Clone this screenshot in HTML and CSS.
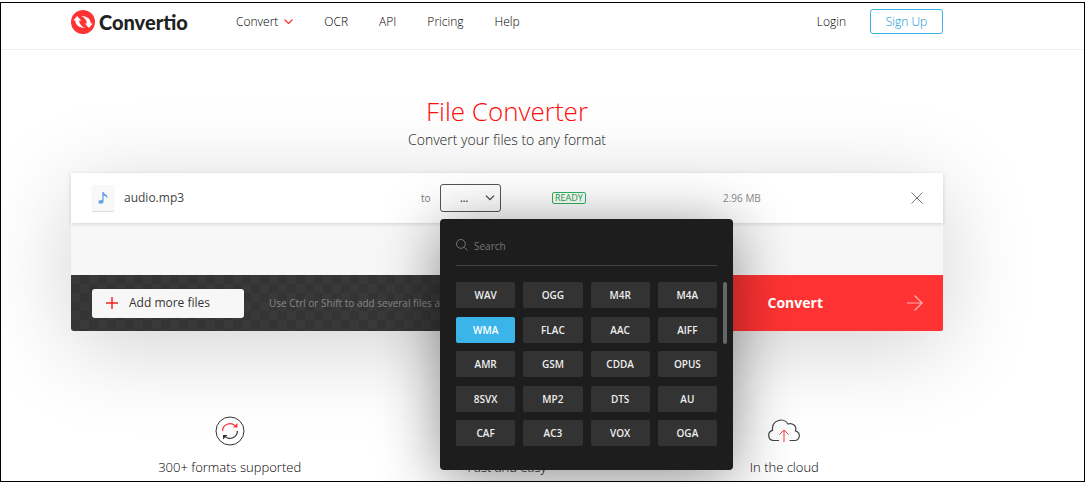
FILE: index.html
```html
<!DOCTYPE html>
<html lang="en">
<head>
<meta charset="utf-8">
<title>File Converter</title>
<link rel="stylesheet" href="styles.css">
</head>
<body>
<div class="page">
  <header class="header">
    <div class="container header-inner">
      <a class="logo" href="#">
        <svg class="logo-mark" viewBox="0 0 24 24" aria-hidden="true"><circle cx="12" cy="12" r="12" fill="#ff3333"/><path d="M2.3 10.6 6.1 6l4.1 4.6H8.100c.2 3.300 2.200 5.600 5.600 7.400-5.600-.1-9.300-2.900-9.500-7.400zM21.700 13.400 17.900 18l-4.100-4.600h2.100c-.2-3.300-2.200-5.600-5.600-7.400 5.600.1 9.300 2.900 9.500 7.400z" fill="#fff"/></svg>
        <span>Convertio</span>
      </a>
      <nav class="nav">
        <a href="#">Convert <svg class="nav-caret" viewBox="0 0 9 5" aria-hidden="true"><path d="M.5.5l4 4 4-4" fill="none" stroke="#ff3333" stroke-width="1.200"/></svg></a>
        <a href="#">OCR</a>
        <a href="#">API</a>
        <a href="#">Pricing</a>
        <a href="#">Help</a>
      </nav>
      <a class="login" href="#">Login</a>
      <button class="signup" type="button">Sign Up</button>
    </div>
  </header>

  <main class="container">
    <h1 class="title">File Converter</h1>
    <p class="subtitle">Convert your files to any format</p>

    <section class="panel">
      <div class="file-row">
        <div class="file">
          <span class="file-icon"><svg viewBox="0 0 10 12" aria-hidden="true"><path d="M4.300 0h1.300c.2 2 3.800 2.400 3.800 4.900 0 .7-.2 1.200-.6 1.700C8.900 4.700 7.300 4 5.600 3.700v5.800c0 1.300-1.200 2.300-2.700 2.300C1.400 11.800.4 11 .4 10c0-1.200 1.300-2.100 2.600-2.100.5 0 .9.1 1.300.3z" fill="#69a0e8"/></svg></span>
          <span class="file-name">audio.mp3</span>
        </div>
        <span class="to">to</span>
        <div class="format">
          <button class="format-toggle" type="button" aria-haspopup="true" aria-expanded="true" aria-label="Output format"><span>...</span><svg viewBox="0 0 10 6" aria-hidden="true"><path d="M1 .7l4 4 4-4" fill="none" stroke="#444" stroke-width="1.200"/></svg></button>
          <div class="menu">
            <label class="search">
              <svg viewBox="0 0 12 12" aria-hidden="true"><path d="M8.300 8.300l3.200 3.200M9.300 4.900a4.400 4.400 0 1 1-8.800 0 4.400 4.400 0 0 1 8.800 0z" fill="none" stroke="#777"/></svg>
              <input type="text" placeholder="Search" aria-label="Search">
            </label>
            <div class="options">
              <div class="option-grid">
                <button type="button">WAV</button><button type="button">OGG</button><button type="button">M4R</button><button type="button">M4A</button>
                <button type="button" class="active">WMA</button><button type="button">FLAC</button><button type="button">AAC</button><button type="button">AIFF</button>
                <button type="button">AMR</button><button type="button">GSM</button><button type="button">CDDA</button><button type="button">OPUS</button>
                <button type="button">8SVX</button><button type="button">MP2</button><button type="button">DTS</button><button type="button">AU</button>
                <button type="button">CAF</button><button type="button">AC3</button><button type="button">VOX</button><button type="button">OGA</button>
              </div>
              <div class="scroll-thumb"></div>
            </div>
          </div>
        </div>
        <div class="state"><span class="status">READY</span></div>
        <div class="file-end">
          <span class="size">2.96 MB</span>
          <button class="remove" type="button" aria-label="Remove file"><svg viewBox="0 0 12 12" aria-hidden="true"><path d="M.5.5l11 11M11.500.5l-11 11" fill="none" stroke="#777"/></svg></button>
        </div>
      </div>
      <div class="panel-space"></div>
      <div class="actions">
        <button class="add" type="button"><svg viewBox="0 0 12 12" aria-hidden="true"><path d="M6 0v12M0 6h12" stroke="#ff2222" stroke-width="1.500"/></svg>Add more files</button>
        <span class="hint">Use Ctrl or Shift to add several files at once</span>
        <button class="convert" type="button"><span>Convert</span><svg viewBox="0 0 16 16" aria-hidden="true"><path d="M0 8h15.200M7.500.5L15.200 8l-7.700 7.500" fill="none" stroke="#ffb3b3" stroke-width="1.200"/></svg></button>
      </div>
    </section>

    <section class="features">
      <div class="feature">
        <svg viewBox="0 0 34 30" aria-hidden="true"><circle cx="17" cy="15" r="14" fill="none" stroke="#333"/><path d="M9.600 15A7.400 7.400 0 0 1 22 9.600" fill="none" stroke="#ff3333" stroke-width="1.200"/><path d="M24.500 7v4.500H20z" fill="#ff3333"/><path d="M24.400 15A7.400 7.400 0 0 1 12 20.400" fill="none" stroke="#333" stroke-width="1.200"/><path d="M10 23.500v-4.500h4.500z" fill="#333"/></svg>
        <span>300+ formats supported</span>
      </div>
      <div class="feature">
        <svg viewBox="0 0 34 30" aria-hidden="true"><circle cx="17" cy="15" r="14" fill="none" stroke="#333"/><path d="M17 7v8l5 3" fill="none" stroke="#ff3333"/></svg>
        <span>Fast and easy</span>
      </div>
      <div class="feature">
        <svg viewBox="0 0 34 30" aria-hidden="true"><path d="M12 24.500H6.500A5.200 5.200 0 0 1 5.500 14.300C4.500 3.500 17 1 21 8c4.500-1.500 9 2 7.500 7 5.500 1.500 5 9.500-1 9.500h-5" fill="none" stroke="#444" stroke-width="1.200"/><path d="M17 26V14M12.500 18.500L17 14l4.500 4.500" fill="none" stroke="#ff3333"/></svg>
        <span>In the cloud</span>
      </div>
    </section>
  </main>
</div>
</body>
</html>
```
FILE: styles.css
```css
* { box-sizing: border-box; }
body {
  margin: 0;
  padding: 2px 1px 1px 0;
  background: #fff;
  color: #333;
  font: 12px/16px "Open Sans", "Noto Sans", sans-serif;
}
button, input { font: inherit; color: inherit; }
button { padding: 0; border: 0; cursor: pointer; }
a { color: inherit; text-decoration: none; }
svg { display: block; flex: none; }

.page {
  min-height: calc(100vh - 3px);
  border: 1px solid #000;
  overflow: hidden;
}
.container { max-width: 872px; margin-left: 70px; }

.header { padding: 6px 0 15px; border-bottom: 1px solid #eee; }
.header-inner { display: flex; align-items: center; }
.logo {
  display: flex;
  align-items: center;
  gap: 4px;
  width: 165px;
  color: #222;
  font: 900 20px/24px Lato, sans-serif;
}
.logo-mark { width: 24px; height: 24px; }
.nav { display: flex; flex: 1; gap: 31px; }
.nav, .login, .signup { font-weight: 300; }
.nav, .login { color: #000; }
.nav a { display: flex; align-items: center; gap: 6px; }
.nav-caret { width: 9px; height: 5px; }
.login { margin-right: 24px; }
.signup {
  width: 73px;
  height: 25px;
  border: 1px solid #3bb4ea;
  border-radius: 3px;
  background: #fff;
  color: #0a94d4;
}

.title {
  margin: 44px 0 0;
  color: #ff0c0c;
  font-size: 26px;
  font-weight: 300;
  line-height: 34px;
  text-align: center;
}
.subtitle {
  margin: 0 0 21px;
  color: #222;
  font-size: 14px;
  font-weight: 300;
  line-height: 24px;
  text-align: center;
}

.panel {
  border-radius: 3px;
  background: #f7f7f7;
  box-shadow: 0 16px 90px rgba(0, 0, 0, 0.18);
}
.file-row {
  display: grid;
  grid-template-columns: 329fr 19px 112fr 171fr 200fr;
  align-items: center;
  height: 50px;
  padding: 0 20px 0 21px;
  background: #fff;
  box-shadow: 0 1px 4px rgba(0, 0, 0, 0.15);
}
.file { display: flex; align-items: center; gap: 10px; }
.file-icon {
  display: grid;
  place-items: center;
  width: 22px;
  height: 26px;
  border-radius: 2px;
  background: #f8f8f8;
  box-shadow: 0 1px 1px rgba(0, 0, 0, 0.15);
}
.file-icon svg { width: 10px; height: 12px; }
.file-name { color: #444; }
.to { color: #777; font-size: 10px; }
.format { position: relative; }
.format-toggle {
  display: flex;
  align-items: center;
  gap: 17px;
  width: 61px;
  height: 28px;
  padding-left: 19px;
  border: 1px solid #555;
  border-radius: 3px;
  background: transparent;
  font-size: 10px;
  font-weight: 600;
}
.format-toggle svg { width: 10px; height: 6px; }
.state { display: flex; }
.status {
  padding: 0 2px;
  border: 1px solid #2bb55b;
  border-radius: 2px;
  color: #18a84a;
  font-size: 9px;
  line-height: 10px;
}
.file-end { display: flex; align-items: center; justify-content: space-between; }
.size { color: #888; font-size: 10px; }
.remove { background: none; }
.remove svg { width: 12px; height: 12px; }
.panel-space { height: 52px; }

.menu {
  position: absolute;
  z-index: 2;
  top: 35px;
  left: 0;
  width: 293px;
  padding: 16px 6px 24px 16px;
  border-radius: 4px;
  background: #1d1d1d;
  box-shadow: 0 8px 60px rgba(0, 0, 0, 0.45);
}
.search {
  display: flex;
  align-items: flex-start;
  gap: 6px;
  height: 31px;
  margin-right: 10px;
  padding-top: 4px;
  border-bottom: 1px solid #444;
}
.search svg { width: 12px; height: 12px; }
.search input {
  flex: 1;
  min-width: 0;
  height: 14px;
  padding: 0;
  border: 0;
  outline: 0;
  background: none;
  color: #ccc;
  font-size: 10px;
}
.search input::placeholder { color: #777; opacity: 1; }
.options { display: flex; gap: 6px; margin-top: 16px; }
.option-grid {
  display: grid;
  flex: 1;
  grid-template-columns: repeat(4, 1fr);
  grid-auto-rows: 26px;
  column-gap: 8px;
  align-content: space-between;
  height: 164px;
}
.option-grid button {
  border-radius: 2px;
  background: #333;
  color: #eee;
  font-size: 10px;
  font-weight: 600;
}
.option-grid .active { background: #3bb4ea; color: #fff; }
.scroll-thumb { width: 4px; height: 62px; border-radius: 2px; background: #666; }

.actions {
  display: flex;
  align-items: center;
  height: 56px;
  padding-left: 21px;
  border-radius: 0 0 3px 3px;
  overflow: hidden;
  background: repeating-conic-gradient(#343434 0 25%, #393939 0 50%) 0 0 / 18px 18px;
}
.add {
  display: flex;
  align-items: center;
  gap: 11px;
  width: 152px;
  height: 29px;
  padding-left: 14px;
  border-radius: 3px;
  background: #f7f7f7;
}
.add svg { width: 12px; height: 12px; }
.hint {
  flex: 1;
  min-width: 0;
  margin-left: 25px;
  color: #888;
  font-size: 10px;
  white-space: nowrap;
}
.convert {
  display: flex;
  align-items: center;
  justify-content: flex-end;
  gap: 84px;
  width: 296px;
  height: 100%;
  padding-right: 20px;
  background: #ff3333;
  color: #fff;
  font-size: 14px;
  font-weight: 700;
}
.convert svg { width: 16px; height: 16px; }

.features {
  display: grid;
  grid-template-columns: repeat(3, 1fr);
  padding: 85px 20px 0;
}
.feature {
  display: flex;
  flex-direction: column;
  align-items: center;
  gap: 13px;
  color: #000;
  font-size: 13px;
  font-weight: 300;
  line-height: 16px;
}
.feature svg { width: 34px; height: 30px; }
```
